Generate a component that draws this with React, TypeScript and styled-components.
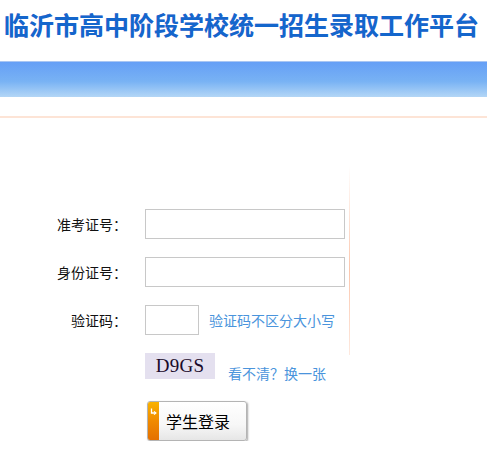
import React from "react";
import styled, { createGlobalStyle } from "styled-components";

const Global = createGlobalStyle`
  html, body { margin: 0; padding: 0; background: #fff; }
  body { font-family: "Noto Sans CJK SC", "Noto Sans", sans-serif; }
`;

const Header = styled.header`
  height: 61px;
  padding-left: 4px;
  display: flex;
  align-items: flex-start;
`;

const Title = styled.h1`
  margin: 0;
  margin-top: 6px;
  font-size: 25px;
  line-height: 36px;
  font-weight: 700;
  color: #1466cc;
  letter-spacing: 0;
  white-space: nowrap;
  text-shadow: 0 0 0.5px rgba(120, 60, 200, 0.4);
`;

const Band = styled.div`
  height: 35px;
  border-top: 1px solid #a9c6f3;
  background: linear-gradient(to bottom, #659ff6 0%, #78b2f4 55%, #b3d6f6 100%);
`;

const Gap = styled.div`
  height: 19px;
`;

const PeachLine = styled.div`
  height: 2px;
  background: #fde4d6;
`;

const Main = styled.main`
  display: flex;
  align-items: flex-start;
`;

const FormArea = styled.div`
  width: 349px;
  padding-top: 91px;
  display: flex;
  flex-direction: column;
`;

const Divider = styled.div`
  width: 1px;
  height: 190px;
  margin-top: 47px;
  background: linear-gradient(to bottom, rgba(251, 200, 175, 0) 0%, #fbc6ad 55%, rgba(251, 200, 175, 0.4) 100%);
`;

const Row = styled.div<{ $mb: number }>`
  display: flex;
  align-items: center;
  margin-bottom: ${(p) => p.$mb}px;
`;

const Label = styled.label`
  width: 127px;
  margin-right: 18px;
  text-align: right;
  font-size: 14px;
  color: #111;
`;

const TextInput = styled.input<{ $w: number }>`
  box-sizing: border-box;
  width: ${(p) => p.$w}px;
  height: 30px;
  margin: 0;
  border: 1px solid #c8c8c8;
  background: #fff;
  outline: none;
`;

const Hint = styled.span<{ $ml: number; $dy?: number }>`
  margin-left: ${(p) => p.$ml}px;
  font-size: 14px;
  color: #4a94dc;
  position: relative;
  top: ${(p) => p.$dy || 0}px;
`;

const Captcha = styled.div`
  margin-left: 145px;
  width: 70px;
  height: 26px;
  background: #e4e0ef;
  display: flex;
  align-items: center;
  justify-content: center;
  font-family: "Liberation Serif", "DejaVu Serif", serif;
  font-size: 19px;
  color: #1a0a2a;
  letter-spacing: 0.3px;
`;

const LoginButton = styled.button`
  margin-left: 147px;
  width: 100px;
  height: 40px;
  padding: 0;
  display: flex;
  align-items: stretch;
  border: 1px solid #b4b4b4;
  border-radius: 3px;
  overflow: hidden;
  background: linear-gradient(to bottom, #ffffff 0%, #f7f7f7 60%, #e6e6e6 100%);
  box-shadow: 1px 1px 2px rgba(0, 0, 0, 0.35);
  cursor: pointer;
`;

const ButtonTab = styled.span`
  width: 11px;
  background: linear-gradient(to bottom, #f9b200 0%, #f08a00 50%, #e47000 100%);
  display: flex;
  justify-content: center;
  padding-top: 6px;
  box-sizing: border-box;
`;

const ButtonText = styled.span`
  flex: 1;
  display: flex;
  align-items: center;
  padding-left: 7px;
  font-family: "Noto Sans CJK SC", sans-serif;
  font-size: 16px;
  color: #000;
`;

export default function App() {
  return (
    <>
      <Global />
      <Header>
        <Title>临沂市高中阶段学校统一招生录取工作平台</Title>
      </Header>
      <Band />
      <Gap />
      <PeachLine />
      <Main>
        <FormArea>
          <Row $mb={18}>
            <Label>准考证号：</Label>
            <TextInput $w={200} />
          </Row>
          <Row $mb={18}>
            <Label>身份证号：</Label>
            <TextInput $w={200} />
          </Row>
          <Row $mb={18}>
            <Label>验证码：</Label>
            <TextInput $w={54} />
            <Hint $ml={10}>验证码不区分大小写</Hint>
          </Row>
          <Row $mb={22}>
            <Captcha>D9GS</Captcha>
            <Hint $ml={13} $dy={7}>看不清？换一张</Hint>
          </Row>
          <LoginButton>
            <ButtonTab>
              <svg width="7" height="8" viewBox="0 0 7 8">
                <path d="M1.5 0.5 V5 H5.5" fill="none" stroke="#fff" strokeWidth="1.3" />
                <path d="M4 3.3 L6 5 L4 6.7" fill="none" stroke="#fff" strokeWidth="1.1" />
              </svg>
            </ButtonTab>
            <ButtonText>学生登录</ButtonText>
          </LoginButton>
        </FormArea>
        <Divider />
      </Main>
    </>
  );
}
